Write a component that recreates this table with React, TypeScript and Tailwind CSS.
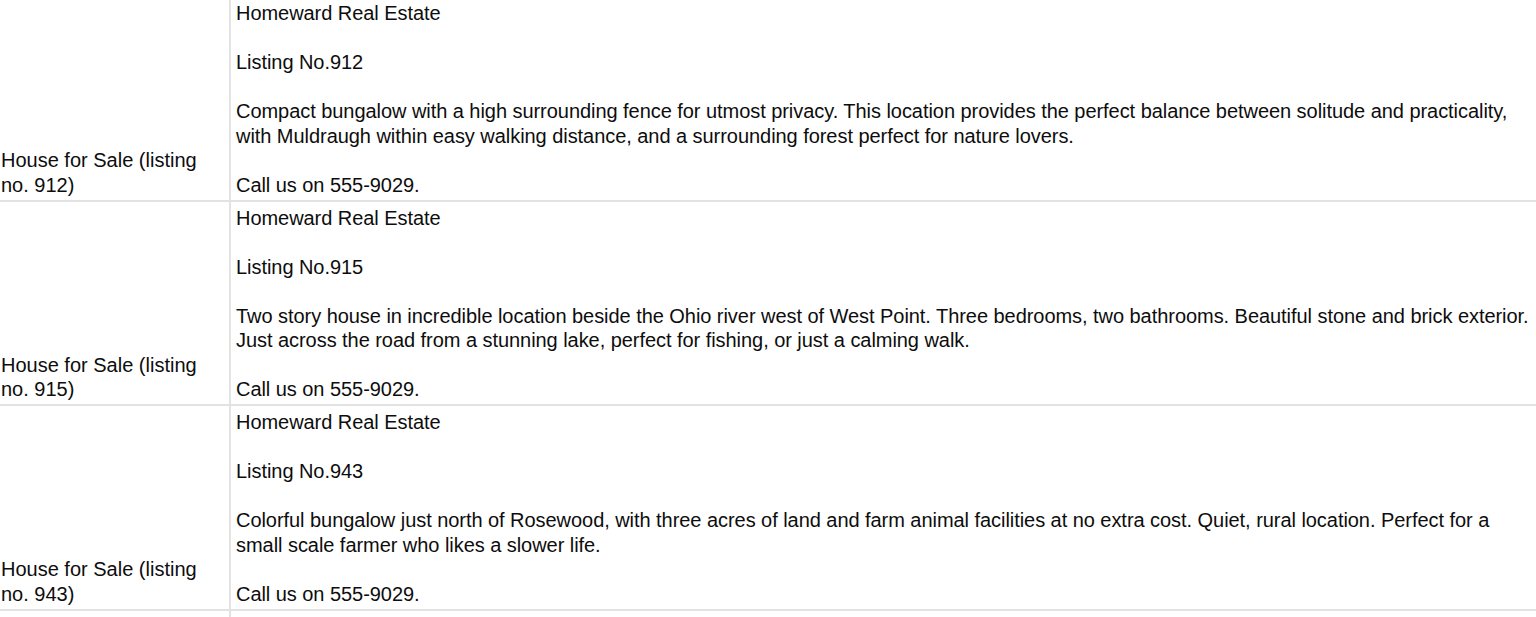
const FONT = "font-['Liberation_Sans','Arial',sans-serif]";

type Listing = {
  no: string;
  lines: string[];
};

const LISTINGS: Listing[] = [
  {
    no: '912',
    lines: [
      'Compact bungalow with a high surrounding fence for utmost privacy. This location provides the perfect balance between solitude and practicality,',
      'with Muldraugh within easy walking distance, and a surrounding forest perfect for nature lovers.',
    ],
  },
  {
    no: '915',
    lines: [
      'Two story house in incredible location beside the Ohio river west of West Point. Three bedrooms, two bathrooms. Beautiful stone and brick exterior.',
      'Just across the road from a stunning lake, perfect for fishing, or just a calming walk.',
    ],
  },
  {
    no: '943',
    lines: [
      'Colorful bungalow just north of Rosewood, with three acres of land and farm animal facilities at no extra cost. Quiet, rural location. Perfect for a',
      'small scale farmer who likes a slower life.',
    ],
  },
];

const Line = ({ text }: { text?: string }) => (
  <div className="h-[24.5px] leading-[24.5px] whitespace-nowrap">{text ?? '\u00a0'}</div>
);

function Row({ item }: { item: Listing }) {
  return (
    <div className="flex border-b-2 border-[#e2e2e2]">
      <div className="w-[231px] shrink-0 border-r-2 border-[#e2e2e2] pl-[1px] pr-[4px] pt-[4px] pb-[2.5px] flex flex-col justify-end">
        <div className="leading-[24.5px]">House for Sale (listing</div>
        <div className="leading-[24.5px]">no. {item.no})</div>
      </div>
      <div className="flex-1 min-w-0 overflow-hidden pl-[5px] pt-[4px] pb-[2.5px] tracking-[-0.05px]">
        <Line text="Homeward Real Estate" />
        <Line />
        <Line text={`Listing No.${item.no}`} />
        <Line />
        {item.lines.map((l, i) => (
          <Line key={i} text={l} />
        ))}
        <Line />
        <Line text="Call us on 555-9029." />
      </div>
    </div>
  );
}

export default function App() {
  return (
    <div className={`min-h-screen bg-white text-[#0d0d0d] text-[20px] overflow-hidden ${FONT}`}>
      <div className="-mt-[3px]">
        {LISTINGS.map((item) => (
          <Row key={item.no} item={item} />
        ))}
        <div className="flex h-[20px]">
          <div className="w-[231px] shrink-0 border-r-2 border-[#e2e2e2]" />
        </div>
      </div>
    </div>
  );
}
